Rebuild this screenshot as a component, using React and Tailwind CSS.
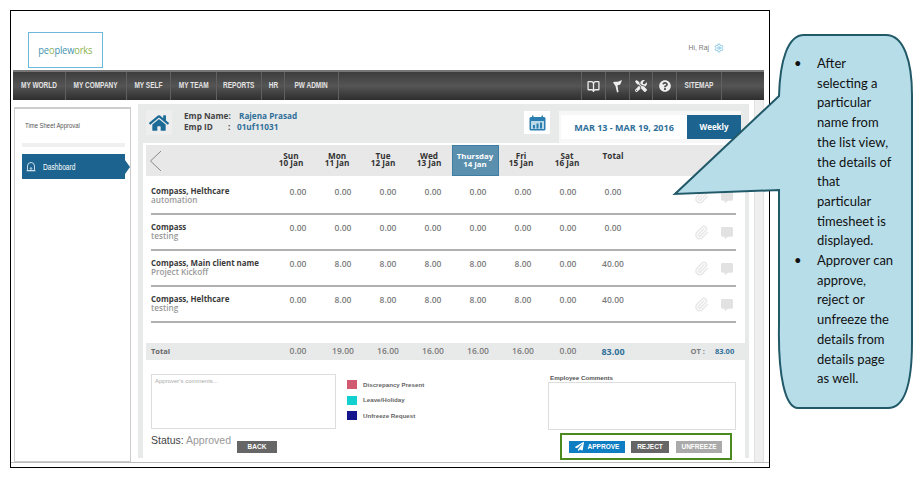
import React from "react";
import { BookOpen, Settings, Paperclip } from "lucide-react";
import { FaHome, FaTools, FaQuestionCircle, FaCommentAlt, FaPaperPlane } from "react-icons/fa";

const rows = [
  ["Compass, Helthcare", "automation", ["0.00","0.00","0.00","0.00","0.00","0.00","0.00","0.00"]],
  ["Compass", "testing", ["0.00","0.00","0.00","0.00","0.00","0.00","0.00","0.00"]],
  ["Compass, Main client name", "Project Kickoff", ["0.00","8.00","8.00","8.00","8.00","8.00","0.00","40.00"]],
  ["Compass, Helthcare", "testing", ["0.00","8.00","8.00","8.00","8.00","8.00","0.00","40.00"]],
];
const days = [["Sun","10 Jan"],["Mon","11 Jan"],["Tue","12 Jan"],["Wed","13 Jan"],["Thursday","14 Jan"],["Fri","15 Jan"],["Sat","16 Jan"]];
const nav = [["MY WORLD","w-[53px]"],["MY COMPANY","w-[61px]"],["MY SELF","w-[44px]"],["MY TEAM","w-[46px]"],["REPORTS","w-[45px]"],["HR","w-[23px]"],["PW ADMIN","w-[54px]"]];
const totals = ["0.00","19.00","16.00","16.00","16.00","16.00","0.00"];
const legend = [["bg-[#cf5a72]","Discrepancy Present"],["bg-[#12cfd0]","Leave/Holiday"],["bg-[#15158c]","Unfreeze Request"]];

function Flag() {
  return (
    <svg width="11" height="14" viewBox="0 0 11 14" fill="#eee">
      <path d="M1 3.5 C2.5 2 4.5 3.5 6.5 2.5 L10 1 L8.5 5 C7.5 6.5 6.5 5.5 5.5 6.5 L6.5 13 L5 13.5 L3.5 7 Z" />
    </svg>
  );
}
function Calendar() {
  return (
    <svg width="17" height="16" viewBox="0 0 17 16">
      <rect x="0.5" y="2" width="16" height="13.5" rx="1.5" fill="#2a7fb0" />
      <rect x="3" y="0.5" width="1.5" height="3" fill="#2a7fb0" />
      <rect x="12.5" y="0.5" width="1.5" height="3" fill="#2a7fb0" />
      <rect x="2" y="6" width="13" height="8" fill="#bcd9e8" />
      <rect x="4" y="10" width="2" height="3.5" fill="#2a7fb0" />
      <rect x="7.5" y="8.5" width="2" height="5" fill="#2a7fb0" />
      <rect x="11" y="7.5" width="2" height="6" fill="#2a7fb0" />
    </svg>
  );
}
function Bell() {
  return (
    <svg width="10" height="11" viewBox="0 0 10 11" fill="none" stroke="#dbe7ef" strokeWidth="0.9">
      <path d="M1.5 9.5 V5 a3.5 3.5 0 0 1 7 0 V9.5 Z" />
      <path d="M0.5 9.8 H9.5" />
      <circle cx="5" cy="7.5" r="0.8" />
    </svg>
  );
}

export default function App() {
  return (
    <div className="relative w-[924px] h-[503px] bg-white overflow-hidden font-['Open_Sans',sans-serif]">
      <div className="ml-[10px] mt-[10px] w-[760px] h-[458px] border border-black flex flex-col">
        {/* top */}
        <div className="h-[59px] shrink-0 flex justify-between items-center pl-[17px] pr-[45px] pt-[18px]">
          <div className="w-[75px] h-[36px] border border-[#6bb8dc] flex items-center justify-center text-[11.5px] tracking-[-0.2px] font-medium">
            <span className="inline-block scale-x-[.81] whitespace-nowrap">
              <span className="text-[#3f93b0]">pe</span><span className="text-[#8db34e]">o</span><span className="text-[#3f93b0]">ple</span><span className="text-[#3f93b0]">w</span><span className="text-[#8db34e]">orks</span>
            </span>
          </div>
          <div className="flex items-center gap-[5px] pb-[3px]">
            <span className="inline-block origin-right scale-x-[.85] text-[8px] text-[#777] font-['Liberation_Sans',sans-serif] whitespace-nowrap">Hi, Raj</span>
            <Settings size={10} className="text-[#6fbde0]" />
          </div>
        </div>
        {/* nav */}
        <div className="ml-[2px] w-[751px] h-[30px] shrink-0 flex border-t-2 border-[#777] bg-gradient-to-b from-[#3d3d3d] via-[#555] to-[#2e2e2e] text-[#e4e4e4] text-[9px] font-bold font-['Liberation_Sans',sans-serif]">
          {nav.map(([t, w]) => (
            <div key={t} className={`${w} flex items-center justify-center border-r border-[#606060]`}><span className="inline-block scale-x-[.72] whitespace-nowrap">{t}</span></div>
          ))}
          <div className="ml-auto flex mr-[42px] border-l border-[#606060]">
            <div className="w-[24px] flex items-center justify-center border-r border-[#606060]"><BookOpen size={13} strokeWidth={2.4} className="text-[#eee]" /></div>
            <div className="w-[24px] flex items-center justify-center border-r border-[#606060]"><Flag /></div>
            <div className="w-[23px] flex items-center justify-center border-r border-[#606060]"><FaTools size={12} className="text-[#eee]" /></div>
            <div className="w-[24px] flex items-center justify-center border-r border-[#606060]"><FaQuestionCircle size={12} className="text-[#eee]" /></div>
            <div className="w-[45px] flex items-center justify-center border-r border-[#606060]"><span className="inline-block scale-x-[.72] whitespace-nowrap">SITEMAP</span></div>
          </div>
        </div>
        {/* body */}
        <div className="h-[363px] shrink-0 flex border-b border-[#bbb]">
          {/* sidebar */}
          <div className="ml-[3px] mt-[7px] w-[117px] h-[355px] border border-[#ccc] border-t-2 shrink-0 flex flex-col pl-[7px] pr-[5px]">
            <div className="mt-[12px] h-[10px] flex items-center text-[7.5px] leading-[10px] pl-[3px] text-[#555] font-['Liberation_Sans',sans-serif]"><span className="inline-block origin-left scale-x-[.79] whitespace-nowrap">Time Sheet Approval</span></div>
            <div className="mt-[12px] h-[4px] bg-[#f0f0f0]"></div>
            <div className="relative mt-[7px] h-[25px] bg-[#1c648f] flex items-center pl-[4px] gap-[7px] text-white text-[8.5px] font-['Liberation_Sans',sans-serif]">
              <Bell />
              <span className="inline-block origin-left scale-x-[.78] pt-[2px] whitespace-nowrap">Dashboard</span>
              <div className="absolute left-full top-[6px] w-0 h-0 border-y-[7px] border-y-transparent border-l-[5px] border-l-[#1c648f]"></div>
            </div>
          </div>
          {/* panel */}
          <div className="ml-[7px] mt-[4px] w-[611px] h-[354px] bg-[#e8e9e9] shrink-0 flex flex-col px-[5px] pr-[4px]">
            <div className="h-[39px] shrink-0 flex items-start text-[8.2px] font-bold">
              <div className="ml-[3px] mt-[6px] w-[26px] h-[25px] bg-[#eeeeee] flex items-center justify-center"><FaHome size={20} className="text-[#1c6a96]" /></div>
              <div className="ml-[12px] mt-[6px] leading-[11px] text-[#444]">
                <div className="flex"><span className="w-[55px]">Emp Name:</span><span className="text-[#2f6f9a]">Rajena Prasad</span></div>
                <div className="flex"><span className="w-[44px]">Emp ID</span><span className="w-[9px]">:</span><span className="text-[#2f6f9a]">01uf11031</span></div>
              </div>
              <div className="ml-auto mt-[7px] w-[26px] h-[23px] bg-white flex items-center justify-center"><Calendar /></div>
              <div className="ml-[9px] mt-[7px] w-[182px] h-[32px] bg-white border-[4px] border-[#f7f7f7] border-r-0 border-l-[2px] flex mr-[4px]">
                <div className="flex-1 flex items-center justify-center text-[9px] pt-[1px] text-[#2f6f9a]">MAR 13 - MAR 19, 2016</div>
                <div className="w-[54px] bg-[#1c648f] text-white flex items-center justify-center text-[8px]">Weekly</div>
              </div>
            </div>
            <div className="flex-1 bg-white flex flex-col pl-[3px]">
              <div className="mt-[2px] h-[31px] shrink-0 bg-[#e8e8e8] flex items-center text-[8.2px] leading-[7.5px] font-bold text-[#333]">
                <div className="w-[122px] pl-[3px]">
                  <svg width="13" height="22" viewBox="0 0 13 22" fill="none" stroke="#888" strokeWidth="1"><path d="M12 1 L1.5 11 L12 21" /></svg>
                </div>
                {days.map(([a, b]) => a === "Thursday" ? (
                  <div key={a} className="w-[47px] h-full shrink-0 -mr-px bg-[#5b8fae] border border-[#3f7ea4] text-white text-[7.8px] text-center flex flex-col justify-center pr-px"><div>{a}</div><div>{b}</div></div>
                ) : (
                  <div key={a} className="w-[46px] text-center shrink-0 pb-[3px]"><div>{a}</div><div>{b}</div></div>
                ))}
                <div className="w-[46px] text-center shrink-0 pb-[10px]">Total</div>
              </div>
              <div className="mt-[3px] pl-[5px] pr-[9px]">
                {rows.map(([a, b, v], i) => (
                  <div key={i} className="h-[36px] border-b-2 border-[#b0b0b0] flex items-start pt-[9px] relative">
                    <div className="w-[124.5px] shrink-0 leading-[7.5px] text-[7.9px] font-bold text-[#3a3a3a] whitespace-nowrap">
                      {a}<div className="text-[#999] text-[8.2px] font-semibold">{b}</div>
                    </div>
                    {v.map((x, j) => <div key={j} className="w-[45px] shrink-0 text-center text-[8.5px] leading-[8px] font-semibold text-[#7b7b7b]">{x}</div>)}
                    <div className="ml-auto mr-[3px] flex items-center gap-[12px] mt-[1px]">
                      <Paperclip size={15} strokeWidth={2.4} className="text-[#e8e8e8]" />
                      <FaCommentAlt size={12} className="text-[#e2e2e2]" />
                    </div>
                  </div>
                ))}
              </div>
              <div className="mt-[20px] h-[17px] shrink-0 bg-[#e8e9e9] flex items-center pl-[5px] text-[8.5px] font-semibold text-[#7b7b7b]">
                <div className="w-[124.5px] shrink-0 text-[7.5px] font-bold text-[#666]">Total</div>
                {totals.map((x, j) => <div key={j} className="w-[45px] shrink-0 text-center">{x}</div>)}
                <div className="w-[45px] shrink-0 text-center font-bold text-[#2f6f9a] text-[9px]">83.00</div>
                <div className="ml-[55px] text-[7.5px] font-bold">OT :</div>
                <div className="ml-[10px] text-[7.5px] font-bold text-[#2f6f9a]">83.00</div>
              </div>
              <div className="mt-[14px] flex pl-[5px] pr-[9px]">
                <div className="w-[185px] shrink-0">
                  <div className="h-[55px] border border-[#ddd] px-[3px] py-[2px] text-[6px] leading-[8px] text-[#aaa] font-['Liberation_Sans',sans-serif]">Approver's comments...</div>
                  <div className="mt-[4px] flex items-start">
                    <div className="text-[10.5px] leading-[14px] font-['Liberation_Sans',sans-serif] text-[#444] whitespace-nowrap">Status: <span className="text-[#999]">Approved</span></div>
                    <div className="ml-[6px] mt-[8px] w-[40px] h-[12px] bg-[#666] text-white text-[6.5px] font-bold flex items-center justify-center font-['Liberation_Sans',sans-serif]">BACK</div>
                  </div>
                </div>
                <div className="ml-[11px] mt-[6px] flex flex-col gap-[6.5px] text-[6.2px] font-['Liberation_Sans',sans-serif] font-bold text-[#666]">
                  {legend.map(([c, t]) => (
                    <div key={t} className="flex items-center gap-[6px] h-[9px]"><div className={`w-[10px] h-[9px] ${c}`}></div>{t}</div>
                  ))}
                </div>
                <div className="ml-auto w-[188px] shrink-0 -mt-[1px]">
                  <div className="h-[8px] leading-[10px] pl-[2px] text-[6.2px] font-['Liberation_Sans',sans-serif] font-bold text-[#555]">Employee Comments</div>
                  <div className="mt-px h-[48px] border border-[#ddd]"></div>
                  <div className="relative z-10 mt-[3px] ml-[12px] w-[172px] h-[27px] bg-white border-2 border-[#4a8a1e] flex items-center pl-[7px] text-white text-[6.5px] font-bold font-['Liberation_Sans',sans-serif]">
                    <div className="w-[56px] h-[12px] bg-[#0f7dc2] flex items-center justify-center gap-[4px]"><FaPaperPlane size={9} />APPROVE</div>
                    <div className="ml-[6px] w-[38px] h-[12px] bg-[#666] flex items-center justify-center">REJECT</div>
                    <div className="ml-[7px] w-[46px] h-[12px] bg-[#aaa] flex items-center justify-center">UNFREEZE</div>
                  </div>
                </div>
              </div>
            </div>
          </div>
          {/* scroll strip */}
          <div className="ml-[5px] w-[10px] bg-[#efefef] border-x border-[#e2e2e2] shrink-0"></div>
        </div>
      </div>

      {/* callout overlay */}
      <svg className="absolute left-0 top-0" width="924" height="503" viewBox="0 0 924 503">
        <path
          d="M804 35 L886 35 C904 35 912 62 912 95 L912 342 C912 385 904 408 888 408 L798 408 C785 408 778 375 779 325 L779 190 L675 194 L779 96 C780 60 788 35 804 35 Z"
          fill="#b7dde9" stroke="#215968" strokeWidth="2" strokeLinejoin="miter"
        />
      </svg>
      <ul className="absolute left-[794px] top-[54px] w-[115px] text-[13px] leading-[19.7px] text-[#111] font-['Lato',sans-serif]">
        <li className="flex"><span className="w-[23px] shrink-0">•</span><span>After<br />selecting a<br />particular<br />name from<br />the list view,<br />the details of<br />that<br />particular<br />timesheet is<br />displayed.</span></li>
        <li className="flex"><span className="w-[23px] shrink-0">•</span><span>Approver can<br />approve,<br />reject or<br />unfreeze the<br />details from<br />details page<br />as well.</span></li>
      </ul>
    </div>
  );
}
